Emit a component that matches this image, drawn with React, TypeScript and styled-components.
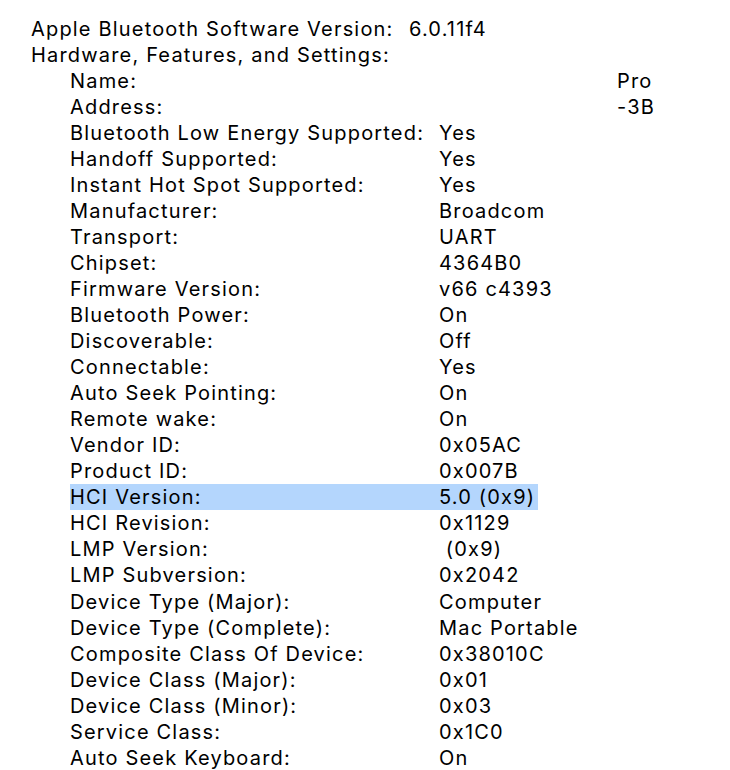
import React from "react";
import styled, { createGlobalStyle } from "styled-components";

const Global = createGlobalStyle`
  html, body { margin: 0; padding: 0; background: #ffffff; }
  body { font-family: Inter, "Liberation Sans", Arial, sans-serif; }
`;

const Page = styled.div`
  width: 730px;
  height: 770px;
  overflow: hidden;
  padding: 15.5px 0 0 31px;
  box-sizing: border-box;
  display: flex;
  flex-direction: column;
  color: #000000;
  font-size: 20px;
  letter-spacing: 1.18px;
  line-height: 25.05px;
`;

const Row = styled.div<{ $nested?: boolean; $selected?: boolean }>`
  display: flex;
  flex: none;
  align-self: flex-start;
  box-sizing: border-box;
  height: 26.05px;
  padding-top: 1px;
  margin-left: ${(p) => (p.$nested ? "39px" : "0")};
  padding-right: ${(p) => (p.$selected ? "3px" : "0")};
  background: ${(p) => (p.$selected ? "#b4d6fd" : "transparent")};
  white-space: pre;
`;

const Label = styled.span<{ $nested?: boolean }>`
  width: ${(p) => (p.$nested ? "369px" : "378px")};
  flex: none;
`;

const Value = styled.span<{ $offset?: number }>`
  padding-left: ${(p) => p.$offset ?? 0}px;
`;

type Item = { label: string; value?: string; offset?: number; selected?: boolean };

const items: Item[] = [
  { label: "Name:", value: "Pro", offset: 178 },
  { label: "Address:", value: "-3B", offset: 178 },
  { label: "Bluetooth Low Energy Supported:", value: "Yes" },
  { label: "Handoff Supported:", value: "Yes" },
  { label: "Instant Hot Spot Supported:", value: "Yes" },
  { label: "Manufacturer:", value: "Broadcom" },
  { label: "Transport:", value: "UART" },
  { label: "Chipset:", value: "4364B0" },
  { label: "Firmware Version:", value: "v66 c4393" },
  { label: "Bluetooth Power:", value: "On" },
  { label: "Discoverable:", value: "Off" },
  { label: "Connectable:", value: "Yes" },
  { label: "Auto Seek Pointing:", value: "On" },
  { label: "Remote wake:", value: "On" },
  { label: "Vendor ID:", value: "0x05AC" },
  { label: "Product ID:", value: "0x007B" },
  { label: "HCI Version:", value: "5.0 (0x9)", selected: true },
  { label: "HCI Revision:", value: "0x1129" },
  { label: "LMP Version:", value: " (0x9)" },
  { label: "LMP Subversion:", value: "0x2042" },
  { label: "Device Type (Major):", value: "Computer" },
  { label: "Device Type (Complete):", value: "Mac Portable" },
  { label: "Composite Class Of Device:", value: "0x38010C" },
  { label: "Device Class (Major):", value: "0x01" },
  { label: "Device Class (Minor):", value: "0x03" },
  { label: "Service Class:", value: "0x1C0" },
  { label: "Auto Seek Keyboard:", value: "On" },
];

export default function App() {
  return (
    <>
      <Global />
      <Page>
        <Row>
          <Label>Apple Bluetooth Software Version:</Label>
          <Value>6.0.11f4</Value>
        </Row>
        <Row>
          <Label>Hardware, Features, and Settings:</Label>
        </Row>
        {items.map((it) => (
          <Row key={it.label} $nested $selected={it.selected}>
            <Label $nested>{it.label}</Label>
            <Value $offset={it.offset}>{it.value}</Value>
          </Row>
        ))}
      </Page>
    </>
  );
}
